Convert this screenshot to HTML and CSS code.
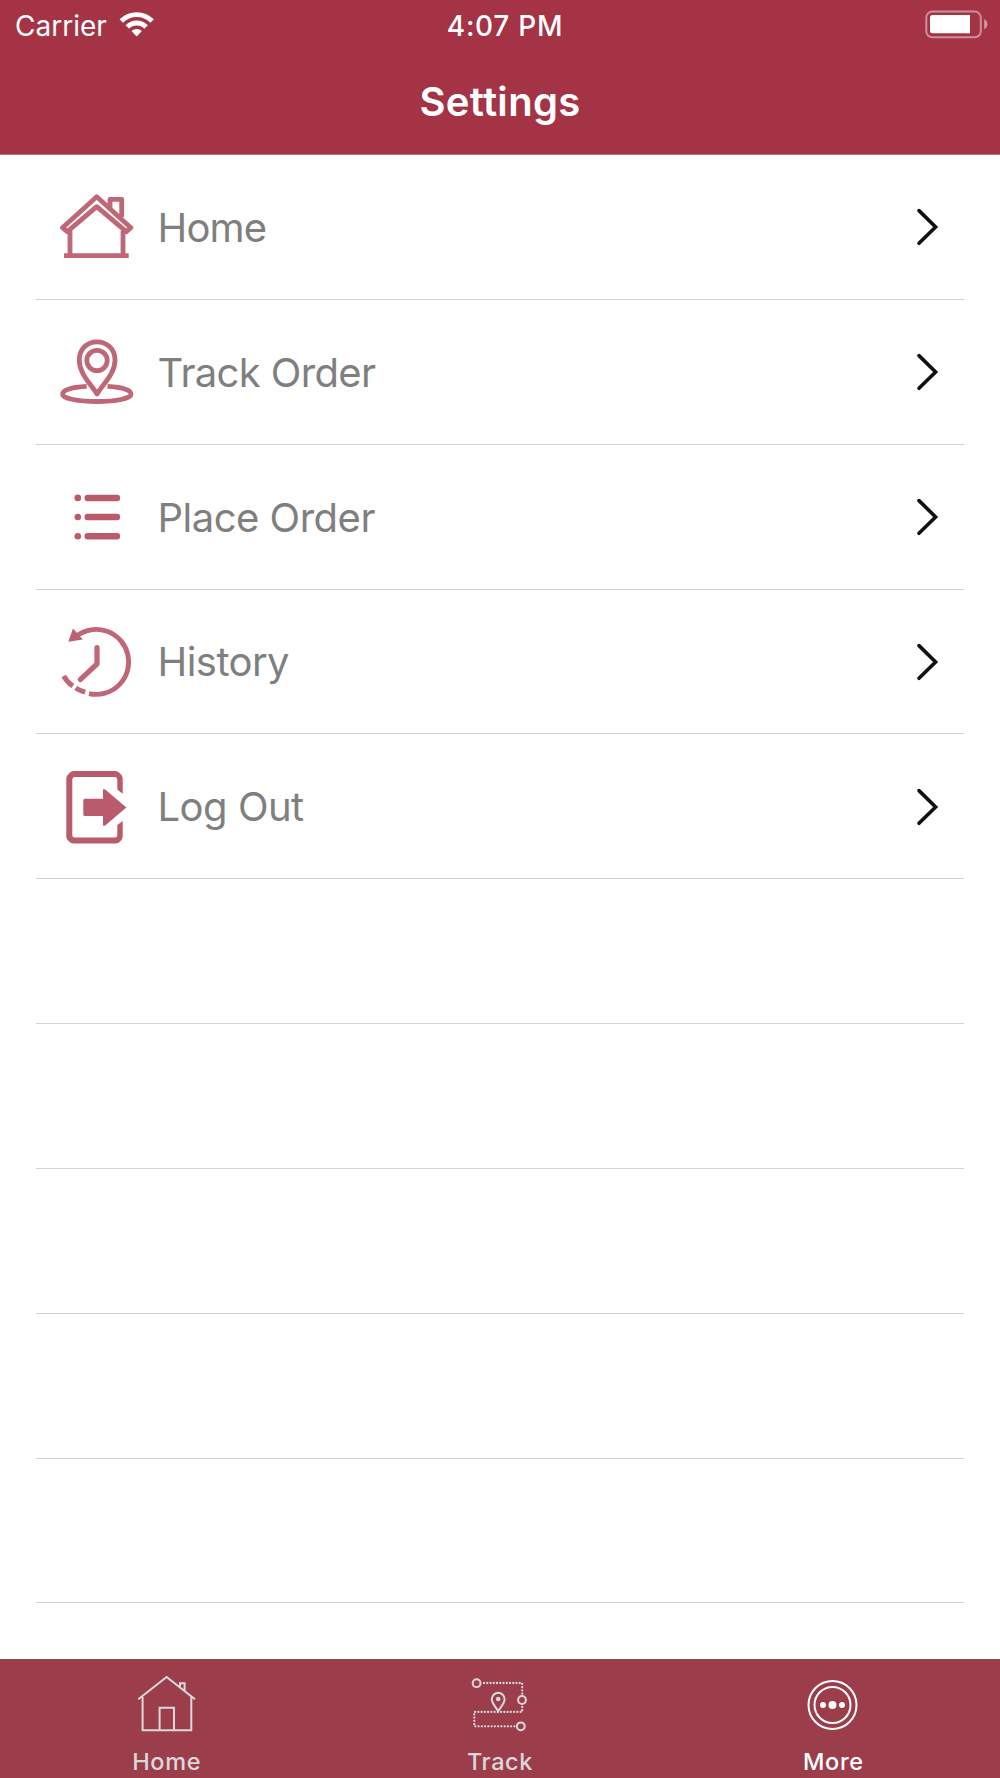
FILE: index.html
```html
<!DOCTYPE html>
<html lang="en">
<head>
<meta charset="utf-8">
<title>Settings</title>
<link rel="stylesheet" href="styles.css">
</head>
<body>
<div class="screen">
  <header class="header">
    <div class="status">
      <div class="status-left">
        <span class="carrier">Carrier</span>
        <svg class="wifi" viewBox="0 0 36 28" fill="none" stroke="#fff">
          <path d="M2.3 11A21.7 21.7 0 0 1 33.1 11" stroke-width="4.8"/>
          <path d="M8.3 17A13.2 13.2 0 0 1 27.1 17" stroke-width="5"/>
          <path d="M12.5 21.1A7.3 7.3 0 0 1 22.9 21.1L17.7 26.4Z" fill="#fff" stroke="none"/>
        </svg>
      </div>
      <span class="time">4:07 PM</span>
      <svg class="battery" viewBox="0 0 64 30">
        <rect x="2.3" y="2.6" width="54.5" height="25.6" rx="6" fill="none" stroke="#fff" stroke-opacity=".45" stroke-width="2"/>
        <rect x="6" y="6" width="40" height="18.3" rx="2.5" fill="#fff"/>
        <rect x="43" y="6" width="3" height="18.3" fill="#fff"/>
        <path d="M60.2 10q3.2 2 3.2 5.2t-3.2 5.2z" fill="#fff" fill-opacity=".5"/>
      </svg>
    </div>
    <h1 class="title">Settings</h1>
  </header>

  <ul class="list">
    <li class="row">
      <svg class="row-icon" viewBox="0 0 76 76">
        <path d="M52 19V10.3H63.7V28M38.7 7.7L4.5 38.7L9.3 42.7L38.7 17.7L68.3 42.7L72.8 38.7ZM12 42V66.7M65 42V66.7M6 66.7H70.7"/>
      </svg>
      <span class="label label-home">Home</span>
      <svg class="chevron" viewBox="0 0 24 40"><path d="M4 3.6L20.6 20L4 36.3"/></svg>
    </li>
    <li class="row">
      <svg class="row-icon" viewBox="0 0 76 76">
        <path d="M39 60C33 50 21.3 40 21.3 26.2C21.3 15 29 7.8 39 7.8S57 15 57 26.2C57 40 45 50 39 60Z"/>
        <circle cx="39" cy="26.5" r="10.2"/>
        <path d="M28.7 52.3C14 53 4.6 56 4.6 60.2C4.6 64.6 20 67.5 39 67.5S73 64.6 73 60.2C73 56 64 53 49.5 52.3"/>
      </svg>
      <span class="label label-track">Track Order</span>
      <svg class="chevron" viewBox="0 0 24 40"><path d="M4 3.6L20.6 20L4 36.3"/></svg>
    </li>
    <li class="row">
      <svg class="row-icon solid" viewBox="0 0 76 76">
        <circle cx="19.8" cy="18.9" r="3.3"/><rect x="26.5" y="15.7" width="35.6" height="6.5" rx="3"/>
        <circle cx="19.8" cy="38" r="3.3"/><rect x="26.5" y="34.8" width="35.6" height="6.5" rx="3"/>
        <circle cx="19.8" cy="57.2" r="3.3"/><rect x="26.5" y="54" width="35.6" height="6.5" rx="3"/>
      </svg>
      <span class="label label-place">Place Order</span>
      <svg class="chevron" viewBox="0 0 24 40"><path d="M4 3.6L20.6 20L4 36.3"/></svg>
    </li>
    <li class="row">
      <svg class="row-icon" viewBox="0 0 76 76">
        <path d="M18 12.4A32.5 32.5 0 1 1 31 69.6"/>
        <path d="M27.2 68.2Q22 66.8 17.7 64M14.8 62Q9 58.1 5.7 52" stroke-width="5"/>
        <path d="M39 23.6V40L22.3 55.6" stroke-width="5.2" stroke-linecap="round" stroke-linejoin="round"/>
        <path d="M10.3 17.8L15 4.6L24.9 15.5Z" class="head"/>
      </svg>
      <span class="label label-history">History</span>
      <svg class="chevron" viewBox="0 0 24 40"><path d="M4 3.6L20.6 20L4 36.3"/></svg>
    </li>
    <li class="row">
      <svg class="row-icon solid" viewBox="0 0 76 76">
        <path d="M15.3 2.1H57.7Q60 2.1 62.4 4.7Q64.7 7 64.7 9.3V24.8L59.3 20.6V10.5Q59.3 8 57 8H16.5Q14.3 8 14.3 10.5V66Q14.3 68.5 16.5 68.5H57Q59.3 68.5 59.3 66V56L64.7 52V67.4Q64.7 70 62.4 72.2Q60 74.4 57.7 74.4H15.3Q13 74.4 10.7 72.2Q8.3 70 8.3 67.4V9.3Q8.3 7 10.7 4.7Q13 2.1 15.3 2.1Z"/>
        <path d="M27 29.8H45V21.5Q45 19.2 47.5 20.7L68.3 38.5L47.5 56.2Q45 57.7 45 55.5V47.1H27Q25.3 47.1 25.3 45.4V31.5Q25.3 29.8 27 29.8Z"/>
      </svg>
      <span class="label label-logout">Log Out</span>
      <svg class="chevron" viewBox="0 0 24 40"><path d="M4 3.6L20.6 20L4 36.3"/></svg>
    </li>
    <li class="row"></li>
    <li class="row"></li>
    <li class="row"></li>
    <li class="row"></li>
    <li class="row"></li>
  </ul>

  <nav class="tabs">
    <a class="tab">
      <svg class="tab-icon" viewBox="0 0 60 60">
        <path d="M1.3 27.3L29.6 5L58 27.3M5.6 25V58.3H54.3V25M22.6 58V35.7H37V58M43 15V11.3H47.6V18.7"/>
      </svg>
      <span class="tab-label">Home</span>
    </a>
    <a class="tab">
      <svg class="tab-icon" viewBox="0 0 60 60">
        <path class="dots" d="M14 11H52.2V23M52.2 35V39.9H4.3V54.3H46"/>
        <circle cx="6.6" cy="11.2" r="3.9"/><circle cx="52" cy="28" r="3.9"/><circle cx="50.8" cy="54.3" r="3.9"/>
        <path d="M28.2 39.2C26 35 21.8 31.5 21.8 27.2A6.4 6.4 0 0 1 34.6 27.2C34.6 31.5 30.4 35 28.2 39.2Z"/>
        <circle class="dot" cx="28.2" cy="27" r="2.3"/>
      </svg>
      <span class="tab-label">Track</span>
    </a>
    <a class="tab active">
      <svg class="tab-icon" viewBox="0 0 60 60">
        <circle cx="29.5" cy="33" r="24"/><circle cx="29.5" cy="33" r="18"/>
        <circle class="dot" cx="20" cy="33" r="3"/><circle class="dot" cx="29.5" cy="33" r="4"/><circle class="dot" cx="39" cy="33" r="3"/>
      </svg>
      <span class="tab-label">More</span>
    </a>
  </nav>
</div>
</body>
</html>
```
FILE: styles.css
```css
* { box-sizing: border-box; }
body { margin: 0; background: #fff; font-family: Inter, "Liberation Sans", sans-serif; }
svg { display: block; flex: none; }
.screen { width: 1000px; height: 1778px; display: flex; flex-direction: column; overflow: hidden; background: #fff; }

.header { height: 155px; flex: none; background: #a33345; color: #fff; border-bottom: 1px solid #c0707d; }
.status { height: 50px; display: grid; grid-template-columns: 1fr auto 1fr; align-items: center; padding: 0 12px 0 15px; }
.status-left { display: flex; align-items: center; gap: 12px; }
.carrier { font-size: 28px; line-height: 52px; }
.wifi { width: 36px; height: 28px; margin-bottom: 4px; }
.time { font-size: 28px; line-height: 52px; font-weight: 500; letter-spacing: .7px; padding-left: 7px; }
.battery { width: 64px; height: 30px; justify-self: end; margin-bottom: 4px; overflow: visible; }
.title { margin: 0; font-size: 40px; line-height: 103px; font-weight: 600; text-align: center; letter-spacing: .3px; }

.list { flex: 1; min-height: 0; margin: 0; padding: 0 36px; list-style: none; overflow: hidden; }
.row { height: 144.85px; display: flex; align-items: center; padding: 1px 25px 0 22px; border-bottom: 1px solid #d5d5d7; }
.row-icon { width: 76px; height: 76px; fill: none; stroke: #bf6776; stroke-width: 4.8; stroke-linejoin: round; }
.row-icon.solid { fill: #b95b6b; stroke: none; }
.row-icon .head { fill: #bb6070; stroke: none; }
.label { flex: 1; padding: 1px 0 0 23.500px; font-size: 40px; line-height: 60px; color: #7f7f7f; }
.label-home { letter-spacing: -.8px; }
.label-track { letter-spacing: -.65px; }
.label-place { letter-spacing: -.5px; }
.label-history { letter-spacing: -.55px; }
.label-logout { letter-spacing: -.5px; }
.chevron { width: 24px; height: 40px; fill: none; stroke: #111; stroke-width: 3.6; stroke-linecap: round; stroke-linejoin: miter; }

.tabs { height: 119px; flex: none; display: grid; grid-template-columns: repeat(3, 1fr); background: #9c3d4c; border-top: 1px solid #7f4a53; }
.tab { display: flex; flex-direction: column; align-items: center; padding-top: 12px; color: #d9d9d9; }
.tab.active { color: #fff; }
.tab-icon { width: 60px; height: 60px; fill: none; stroke: currentColor; stroke-width: 2; }
.tab-icon .dots { stroke-width: 2.3; stroke-dasharray: 0 3.25; stroke-linecap: round; }
.tab-icon .dot { fill: currentColor; stroke: none; }
.tab-label { font-size: 23.5px; line-height: 30px; font-weight: 500; margin-top: 15px; letter-spacing: .6px; }
```
